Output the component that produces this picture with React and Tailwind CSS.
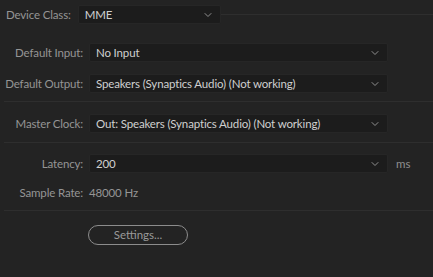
import { ChevronDown } from 'lucide-react'

const font = { fontFamily: 'Lato, "Liberation Sans", sans-serif' }

function Select({ value, className = '' }) {
  return (
    <div className={`h-[19px] flex items-center justify-between bg-[#1c1c1c] border border-[#262626] rounded-[2px] pl-[6px] pr-[6px] ${className}`}>
      <span className="text-[11.5px] tracking-[-0.15px] text-[#d0d0d0] whitespace-nowrap">{value}</span>
      <ChevronDown size={12} strokeWidth={2} className="text-[#8f8f8f]" />
    </div>
  )
}

function Row({ label, children, className = '' }) {
  return (
    <div className={`h-[19px] flex items-center ${className}`}>
      <div className="w-[84px] text-right text-[11.5px] tracking-[-0.15px] text-[#959595] whitespace-nowrap pr-[1px]">{label}</div>
      <div className="ml-[5px] flex items-center">{children}</div>
    </div>
  )
}

export default function App() {
  return (
    <div className="w-[433px] h-[277px] bg-[#232323] overflow-hidden pt-[5px]" style={font}>
      {/* device class header */}
      <div className="h-[19px] flex items-center">
        <span className="pl-[6px] text-[11.5px] tracking-[-0.15px] text-[#959595] whitespace-nowrap">Device Class:</span>
        <Select value="MME" className="ml-[7px] w-[143px]" />
        <div className="flex-1 h-px bg-[#2e2e2e]" />
      </div>

      <Row label="Default Input:" className="mt-[19px]">
        <Select value="No Input" className="w-[299px]" />
      </Row>
      <Row label="Default Output:" className="mt-[12px]">
        <Select value="Speakers (Synaptics Audio) (Not working)" className="w-[299px]" />
      </Row>

      <div className="ml-[4px] mt-[8px] h-px bg-[#2e2e2e]" />

      <Row label="Master Clock:" className="mt-[12px]">
        <Select value="Out: Speakers (Synaptics Audio) (Not working)" className="w-[299px]" />
      </Row>

      <div className="ml-[4px] mt-[9px] h-px bg-[#2e2e2e]" />

      <Row label="Latency:" className="mt-[11px]">
        <Select value="200" className="w-[299px]" />
        <span className="ml-[8px] text-[11.5px] text-[#8f8f8f]">ms</span>
      </Row>
      <Row label="Sample Rate:" className="mt-[10px]">
        <span className="text-[11.5px] tracking-[-0.15px] text-[#959595]">48000 Hz</span>
      </Row>

      <div className="ml-[4px] mt-[8px] h-px bg-[#2e2e2e]" />

      <div className="pl-[88px] mt-[10px]">
        <button className="w-[100px] h-[20px] rounded-full border-[1.5px] border-[#8c8c8c] text-[11.5px] text-[#9a9a9a] leading-none">
          Settings...
        </button>
      </div>
    </div>
  )
}
